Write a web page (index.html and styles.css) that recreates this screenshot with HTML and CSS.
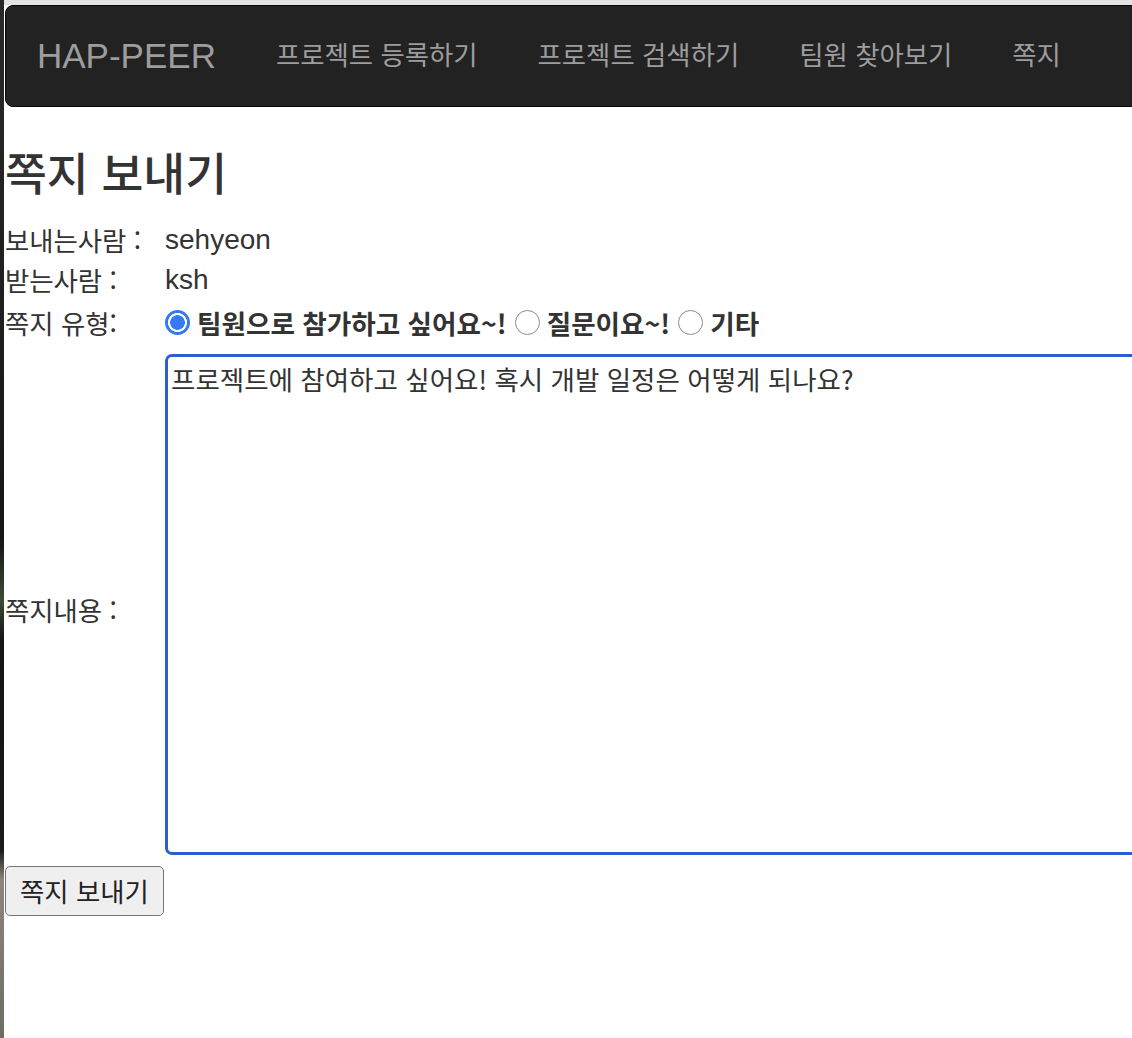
FILE: index.html
```html
<!DOCTYPE html>
<html lang="ko">
<head>
<meta charset="utf-8">
<title>HAP-PEER - 쪽지 보내기</title>
<link rel="stylesheet" href="styles.css">
</head>
<body>
<div class="screen">
  <div class="strip"></div>
  <div class="page">
    <nav class="navbar">
      <a class="brand" href="#">HAP-PEER</a>
      <ul class="nav">
        <li><a href="#">프로젝트 등록하기</a></li>
        <li><a href="#">프로젝트 검색하기</a></li>
        <li><a href="#">팀원 찾아보기</a></li>
        <li><a href="#">쪽지</a></li>
      </ul>
    </nav>
    <main class="content">
      <h2 class="title">쪽지 보내기</h2>
      <form class="msg-form">
        <table class="msg-table">
          <colgroup>
            <col class="col-label">
            <col class="col-field">
          </colgroup>
          <tr class="row-text">
            <td class="label">보내는사람 :</td>
            <td class="value">sehyeon</td>
          </tr>
          <tr class="row-text">
            <td class="label">받는사람 :</td>
            <td class="value">ksh</td>
          </tr>
          <tr class="row-type">
            <td class="label">쪽지 유형:</td>
            <td>
              <div class="radios">
                <label class="option"><input class="radio" type="radio" name="type" checked><span>팀원으로 참가하고 싶어요~!</span></label>
                <label class="option"><input class="radio" type="radio" name="type"><span>질문이요~!</span></label>
                <label class="option"><input class="radio" type="radio" name="type"><span>기타</span></label>
              </div>
            </td>
          </tr>
          <tr class="row-body">
            <td class="label label-body">쪽지내용 :</td>
            <td class="body-cell"><textarea class="body-input">프로젝트에 참여하고 싶어요! 혹시 개발 일정은 어떻게 되나요?</textarea></td>
          </tr>
        </table>
        <button class="send-btn" type="button">쪽지 보내기</button>
      </form>
    </main>
  </div>
</div>
</body>
</html>
```

FILE: styles.css
```css
* { box-sizing: border-box; }

html, body {
  margin: 0;
  padding: 0;
  background: #fff;
}

body {
  font-family: "Noto Sans CJK KR", "Liberation Sans", sans-serif;
  color: #333;
  overflow: hidden;
}

.screen {
  display: flex;
  width: 1132px;
  height: 1038px;
  overflow: hidden;
}

.strip {
  flex: 0 0 4px;
  background: linear-gradient(#2a2a2a 0, #161616 540px, #3d4a33 600px, #141414 640px, #1a1a1a 850px, #8b877a 880px, #6f6d60 1038px);
}

.page {
  flex: 1;
  min-width: 0;
  padding-top: 5px;
  padding-left: 1px;
  background: linear-gradient(#e3e3e3 0, #e3e3e3 5px, #fff 5px);
  overflow: hidden;
}

/* navbar */
.navbar {
  display: flex;
  align-items: flex-start;
  width: calc(100% + 30px);
  height: 102px;
  background: #222;
  border: 1px solid #080808;
  border-radius: 8px;
}

.brand {
  display: block;
  padding: 0 30px 0 31px;
  font-family: "Liberation Sans", sans-serif;
  font-size: 35px;
  line-height: 100px;
  color: #9d9d9d;
  text-decoration: none;
}

.nav {
  display: flex;
  margin: 0;
  padding: 0;
  list-style: none;
}

.nav a {
  display: block;
  padding: 0 30px;
  font-size: 26.4px;
  line-height: 95px;
  color: #9d9d9d;
  text-decoration: none;
}

/* content */
.title {
  margin: 38px 0 0;
  font-size: 45.5px;
  font-weight: 500;
  line-height: 52px;
  color: #333;
}

.msg-table {
  width: 1180px;
  margin-top: 23px;
  table-layout: fixed;
  border-collapse: collapse;
  border-spacing: 0;
}

.col-label { width: 160px; }
.col-field { width: 1020px; }

.msg-table td {
  padding: 0;
  vertical-align: middle;
}

.label {
  font-size: 26.4px;
  line-height: 40px;
  white-space: nowrap;
}

.msg-table .label-body {
  padding-top: 18px;
}

.value {
  font-family: "Liberation Sans", sans-serif;
  font-size: 28px;
  line-height: 40px;
}

.row-text td {
  height: 40px;
}

.row-type td {
  height: 46px;
}

.radios {
  display: flex;
  align-items: center;
  gap: 8px;
  font-weight: 700;
  font-size: 26.6px;
  line-height: 40px;
  white-space: nowrap;
}

.option {
  display: flex;
  align-items: center;
  gap: 7px;
}

.radio {
  appearance: none;
  -webkit-appearance: none;
  flex: 0 0 25px;
  width: 25px;
  height: 25px;
  margin: 0 0 2px;
  border-radius: 50%;
  border: 1px solid #8b8b8b;
  background: #fff;
}

.radio:checked {
  border: none;
  background: radial-gradient(circle, #3479f6 0, #3479f6 7px, #fff 7.6px, #fff 9.2px, #3479f6 9.8px);
}

.msg-table .body-cell {
  padding-top: 8px;
}

.body-input {
  display: block;
  width: 1000px;
  height: 501px;
  margin: 0;
  padding: 2px 3px;
  border: 3px solid #2b5fcb;
  border-radius: 7px;
  outline: none;
  resize: none;
  font-family: "Noto Sans CJK KR", "Liberation Sans", sans-serif;
  font-size: 26.5px;
  line-height: 40px;
  color: #333;
  background: #fff;
}

.send-btn {
  display: block;
  width: 159px;
  height: 50px;
  margin-top: 11px;
  padding: 0;
  border: 1px solid #767676;
  border-radius: 5px;
  background: #efefef;
  font-family: "Noto Sans CJK KR", "Liberation Sans", sans-serif;
  font-size: 26.4px;
  line-height: 46px;
  color: #222;
}
```
